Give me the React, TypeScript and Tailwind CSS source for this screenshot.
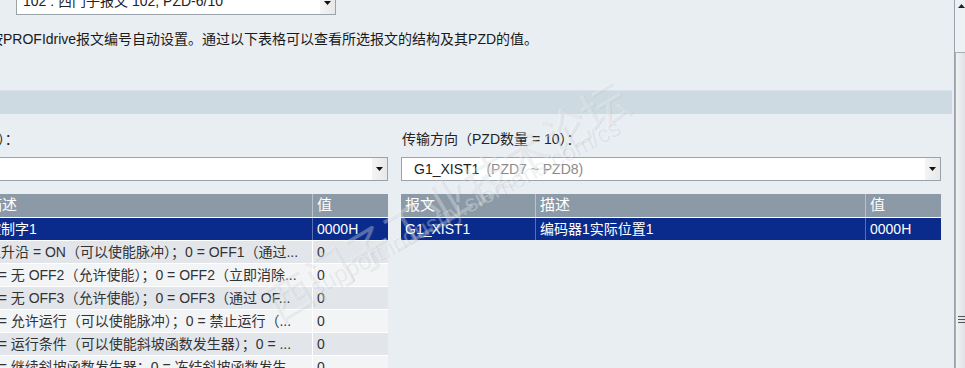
import React from "react";

const FONT = "font-['Liberation_Sans','Noto_Sans_CJK_SC',sans-serif]";

function Arrow() {
  return (
    <svg width="7" height="4" viewBox="0 0 7 4">
      <path d="M0 0 L7 0 L3.5 4 Z" fill="#111" />
    </svg>
  );
}

function Dropdown({ children, className = "", textClass = "" }: { children: React.ReactNode; className?: string; textClass?: string }) {
  return (
    <div className={`flex h-[24px] shrink-0 items-stretch border border-[#9aa2aa] bg-white ${className}`}>
      <div className={`flex flex-1 items-center overflow-hidden whitespace-nowrap pl-[12px] text-[14px] leading-[18px] text-[#222] ${textClass}`}>
        {children}
      </div>
      <div className="flex w-[15px] items-center justify-center bg-gradient-to-r from-[#f4f4f4] to-[#e8e8e8]">
        <Arrow />
      </div>
    </div>
  );
}

type Row = { a: string; b: string; c: string };

function Table({ rows }: { rows: Row[] }) {
  return (
    <div className="flex w-[540px] flex-col text-[14px] leading-[22px]">
      <div className="flex h-[23px] shrink-0 bg-[#8b9aa6] text-[15px] text-white">
        <div className="w-[134px] px-[4px]">报文</div>
        <div className="w-[330px] border-l border-[#b8c3cb] px-[4px]">描述</div>
        <div className="flex-1 border-l border-[#b8c3cb] px-[4px]">值</div>
      </div>
      {rows.map((r, i) => {
        const sel = i === 0;
        const bg = sel ? "bg-[#0a2b8c] text-white" : i % 2 === 1 ? "bg-[#e2e6ea] text-[#333]" : "bg-[#f3f4f6] text-[#333]";
        return (
          <div key={i} className={`flex h-[23px] shrink-0 border-t border-white ${bg}`}>
            <div className="w-[134px] overflow-hidden whitespace-nowrap px-[4px]">{r.a}</div>
            <div className={`w-[330px] overflow-hidden whitespace-nowrap border-l px-[4px] ${sel ? "border-[#5a6fae]" : "border-white"}`}>{r.b}</div>
            <div className={`flex-1 overflow-hidden whitespace-nowrap border-l px-[4px] ${sel ? "border-[#5a6fae]" : "border-white"}`}>{r.c}</div>
          </div>
        );
      })}
    </div>
  );
}

const leftRows: Row[] = [
  { a: "STW1", b: "控制字1", c: "0000H" },
  { a: "STW1.0", b: "上升沿 = ON（可以使能脉冲）；0 = OFF1（通过...", c: "0" },
  { a: "STW1.1", b: "1 = 无 OFF2（允许使能）；0 = OFF2（立即消除...", c: "0" },
  { a: "STW1.2", b: "1 = 无 OFF3（允许使能）；0 = OFF3（通过 OF...", c: "0" },
  { a: "STW1.3", b: "1 = 允许运行（可以使能脉冲）；0 = 禁止运行（...", c: "0" },
  { a: "STW1.4", b: "1 = 运行条件（可以使能斜坡函数发生器）；0 = ...", c: "0" },
  { a: "STW1.5", b: "1 = 继续斜坡函数发生器；0 = 冻结斜坡函数发生...", c: "0" },
];

const rightRows: Row[] = [{ a: "G1_XIST1", b: "编码器1实际位置1", c: "0000H" }];

export default function App() {
  return (
    <div className={`relative flex h-[368px] w-[965px] overflow-hidden bg-[#e9eef3] ${FONT}`}>
      <div className="relative flex w-[954px] shrink-0 flex-col">
        {/* top dropdown */}
        <div className="h-[15px] shrink-0 pl-[16px]">
          <Dropdown className="-mt-[9px] w-[320px]" textClass="pb-[5px]">
            <span className="-ml-[6px]">102 : 西门子报文 102, PZD-6/10</span>
          </Dropdown>
        </div>
        {/* description */}
        <div className="mt-[15px] h-[18px] shrink-0 whitespace-nowrap text-[14px] leading-[18px] text-[#1a1a1a]">
          <span className="-ml-[11px] inline-block">按PROFIdrive报文编号自动设置。通过以下表格可以查看所选报文的结构及其PZD的值。</span>
        </div>
        {/* band */}
        <div className="mt-[42px] h-[24px] w-[952px] shrink-0 border-t border-[#d9e2e8] bg-[#cddae1]" />
        {/* panels */}
        <div className="-ml-[152px] mt-[17px] flex shrink-0 gap-[13px]">
          <div className="flex w-[540px] shrink-0 flex-col">
            <div className="h-[16px] shrink-0 whitespace-nowrap text-[14px] leading-[16px] text-[#222]">接收方向（PZD数量 = 6）：</div>
            <Dropdown className="mt-[10px]">
              <span>STW1 (PZD1)</span>
            </Dropdown>
            <div className="mt-[13px] shrink-0">
              <Table rows={leftRows} />
            </div>
          </div>
          <div className="flex w-[540px] shrink-0 flex-col">
            <div className="h-[16px] shrink-0 whitespace-nowrap pl-[1px] text-[14px] leading-[16px] text-[#222]">传输方向（PZD数量 = 10）：</div>
            <Dropdown className="mt-[10px]">
              <span>G1_XIST1</span>
              <span className="ml-[7px] text-[#8a8a8a]">(PZD7 ~ PZD8)</span>
            </Dropdown>
            <div className="mt-[13px] shrink-0">
              <Table rows={rightRows} />
            </div>
          </div>
        </div>
      </div>

      {/* scrollbar */}
      <div className="relative flex w-[11px] shrink-0 flex-col border-l border-[#9aa3ab] bg-[#eef1f4]">
        <div className="flex h-[12px] shrink-0 items-center justify-center pl-[2px]">
          <svg width="7" height="4" viewBox="0 0 7 4">
            <path d="M0 4 L7 4 L3.5 0 Z" fill="#222" />
          </svg>
        </div>
        <div className="mt-[40px] flex flex-1 flex-col border-l border-t border-[#a8aeb4] bg-gradient-to-r from-[#f1f2f4] to-[#dfe1e4]">
          <div className="mt-[263px] flex flex-col gap-[2px] pl-[2px]">
            <div className="h-[1px] w-[7px] bg-[#555]" />
            <div className="h-[1px] w-[7px] bg-[#555]" />
            <div className="h-[1px] w-[7px] bg-[#555]" />
          </div>
        </div>
      </div>

      {/* watermark */}
      <div className="pointer-events-none absolute left-[240px] top-[180px] -rotate-[31deg] whitespace-nowrap text-[46px] leading-[46px] text-white/30 [text-shadow:1px_1px_0_rgba(120,130,140,0.15)]">
        西门子工业技术论坛
      </div>
      <div className="pointer-events-none absolute left-[290px] top-[195px] -rotate-[28deg] whitespace-nowrap text-[24px] leading-[24px] text-white/30 [text-shadow:1px_1px_0_rgba(120,130,140,0.15)]">
        support.industry.siemens.com/cs
      </div>
    </div>
  );
}
